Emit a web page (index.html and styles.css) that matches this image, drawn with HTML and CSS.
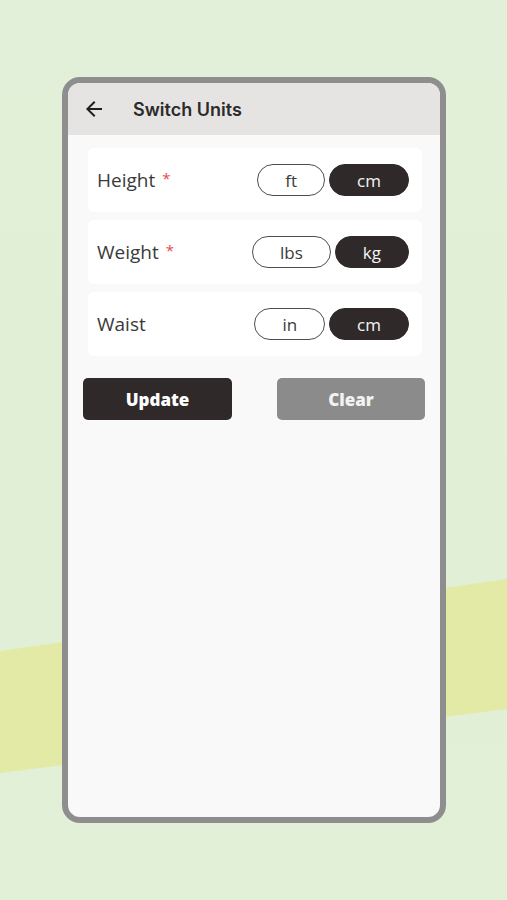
FILE: index.html
```html
<!DOCTYPE html>
<html lang="en">
<head>
<meta charset="utf-8">
<title>Switch Units</title>
<link rel="stylesheet" href="styles.css">
</head>
<body>
<div class="screen">
  <div class="band"></div>
  <div class="phone">
    <header class="topbar">
      <svg class="back" viewBox="0 0 24 24" width="24" height="24" aria-hidden="true">
        <path d="M20 11H7.83l5.59-5.59L12 4l-8 8 8 8 1.41-1.41L7.83 13H20v-2z" fill="#1f1f1f"/>
      </svg>
      <h1 class="title">Switch Units</h1>
    </header>
    <div class="list">
      <div class="card">
        <span class="label">Height <span class="req">*</span></span>
        <div class="toggles">
          <span class="toggle">ft</span>
          <span class="toggle on">cm</span>
        </div>
      </div>
      <div class="card">
        <span class="label">Weight <span class="req">*</span></span>
        <div class="toggles">
          <span class="toggle">lbs</span>
          <span class="toggle on">kg</span>
        </div>
      </div>
      <div class="card">
        <span class="label">Waist</span>
        <div class="toggles">
          <span class="toggle">in</span>
          <span class="toggle on">cm</span>
        </div>
      </div>
    </div>
    <div class="actions">
      <button class="btn primary">Update</button>
      <button class="btn muted">Clear</button>
    </div>
  </div>
</div>
</body>
</html>
```

FILE: styles.css
```css
html, body {
  margin: 0;
  padding: 0;
}
body {
  background: #e2f0d7;
  font-family: "Open Sans", "Liberation Sans", sans-serif;
}
.screen {
  position: relative;
  width: 507px;
  height: 900px;
  box-sizing: border-box;
  padding: 77px 0 0 62px;
  overflow: hidden;
  background: linear-gradient(180deg, #e3f0d9 0%, #e1efd6 60%, #e2f0d7 100%);
}
.band {
  position: absolute;
  inset: 0;
  background: #e2eaa6;
  clip-path: polygon(0 651px, 507px 579px, 507px 709px, 0 773px);
}
.phone {
  position: relative;
  z-index: 1;
  width: 384px;
  height: 746px;
  box-sizing: border-box;
  border: 6px solid #8e8e8e;
  border-radius: 18px;
  overflow: hidden;
  background: #f9f9f9;
}
.topbar {
  height: 52px;
  background: #e6e4e2;
  display: flex;
  align-items: center;
  padding-left: 14px;
  gap: 27px;
}
.back {
  display: block;
  flex: none;
}
.title {
  margin: 0;
  font-family: Inter, "Liberation Sans", sans-serif;
  font-weight: 600;
  font-size: 18px;
  color: #2b2b2b;
  letter-spacing: 0;
}
.list {
  padding: 13px 18px 0 20px;
  display: flex;
  flex-direction: column;
  gap: 8px;
}
.card {
  height: 64px;
  background: #ffffff;
  border-radius: 6px;
  display: flex;
  align-items: center;
  justify-content: space-between;
  padding: 0 13px 0 9px;
}
.label {
  font-size: 19px;
  color: #3a3a3a;
}
.req {
  color: #e64a4a;
  font-size: 15px;
  vertical-align: 3px;
  margin-left: 2px;
}
.toggles {
  display: flex;
  gap: 4px;
}
.toggle {
  height: 32px;
  box-sizing: border-box;
  border: 1.5px solid #4d4d4d;
  border-radius: 16px;
  padding: 0 27px;
  display: flex;
  align-items: center;
  justify-content: center;
  font-size: 17px;
  color: #3a3a3a;
  background: #ffffff;
}
.toggle.on {
  background: #2f2a29;
  border-color: #2f2a29;
  color: #f4f4f4;
}
.actions {
  display: flex;
  justify-content: space-between;
  padding: 22px 15px 0;
}
.btn {
  width: 149px;
  height: 42px;
  border: none;
  border-radius: 5px;
  font-family: "Open Sans", "Liberation Sans", sans-serif;
  font-weight: 800;
  font-size: 17px;
  color: #ffffff;
  padding: 0;
}
.btn.primary {
  background: #2f2a29;
}
.btn.muted {
  width: 148px;
  background: #8b8b8b;
  color: #f2f2f2;
}
```
